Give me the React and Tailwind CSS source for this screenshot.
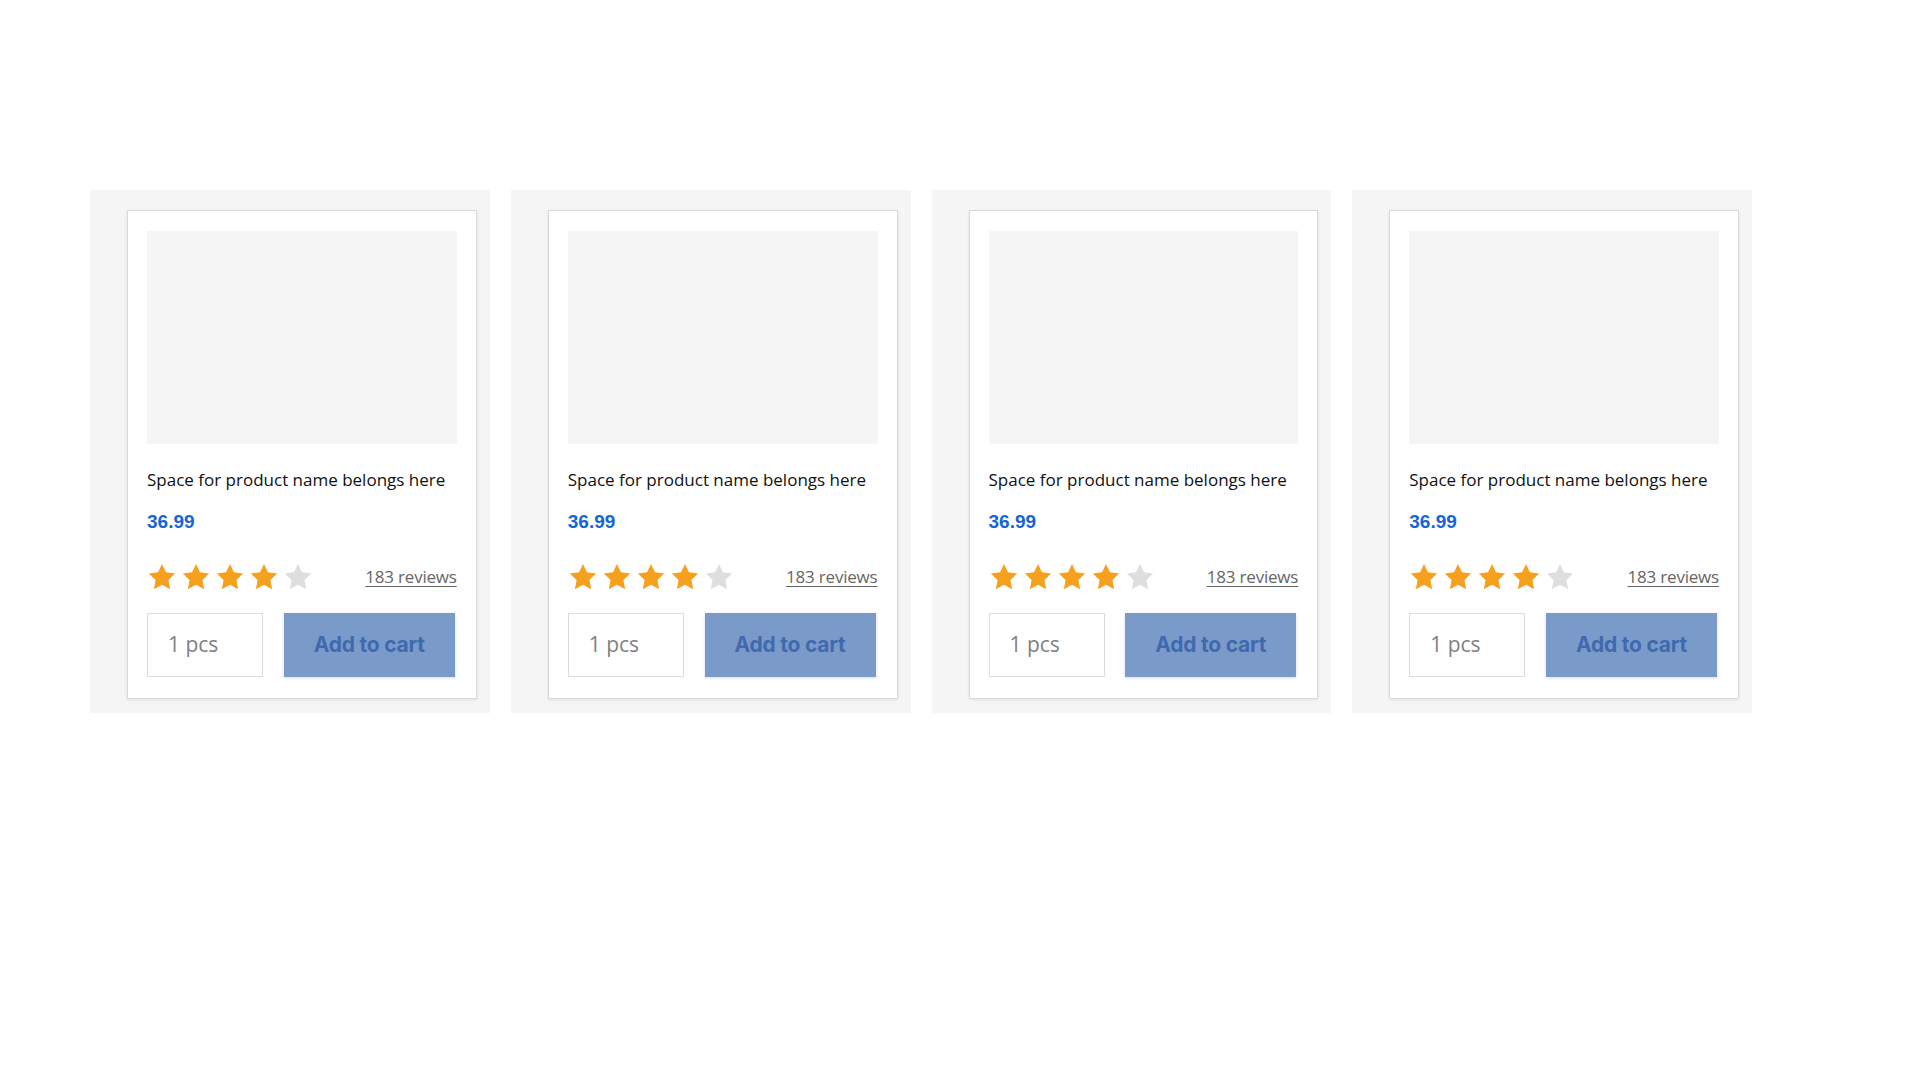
import React from 'react';

const Star = ({ filled }) => (
  <svg viewBox="0 0 24 24" className="w-[30px] h-[28px]" aria-hidden="true">
    <path
      d="M12 .8l3.4 7.2 7.9 1-5.8 5.5 1.5 7.9L12 18.6l-7 3.8 1.5-7.9L.7 9l7.9-1z"
      fill={filled ? '#f6a11d' : '#dedede'}
    />
  </svg>
);

const ProductCard = () => (
  <div className="bg-[#f5f5f5] pl-[37px] pr-[13px] pt-[20px] pb-[14px]">
    <div className="bg-white border border-[#d9d9d9] shadow-[0_1px_3px_rgba(0,0,0,0.08)] px-[19px] pt-[20px] pb-[21px]">
      <div className="h-[213px] bg-[#f5f5f5]" />
      <p className="mt-[25px] text-[17px] leading-[22px] text-[#111] font-['Open_Sans',sans-serif]">
        Space for product name belongs here
      </p>
      <p className="mt-[20px] text-[19px] leading-[22px] font-bold text-[#1565d8] font-['Liberation_Sans',Arial,sans-serif]">
        36.99
      </p>
      <div className="mt-[30px] flex items-center justify-between">
        <div className="flex items-center gap-[4px]">
          <Star filled />
          <Star filled />
          <Star filled />
          <Star filled />
          <Star />
        </div>
        <a href="#" className="text-[17px] leading-[22px] text-[#666] underline underline-offset-[3px] font-['Open_Sans',sans-serif] tracking-[-0.2px]">
          183 reviews
        </a>
      </div>
      <div className="mt-[22px] flex items-center justify-between">
        <div className="w-[116px] h-[64px] border border-[#dcdcdc] flex items-center pl-[20px] text-[21px] text-[#808080] font-['Open_Sans',sans-serif]">
          1 pcs
        </div>
        <button className="w-[171px] h-[64px] mr-[2px] bg-[#7a9bca] shadow-[0_1px_3px_rgba(0,0,0,0.15)] text-[21px] font-bold text-[#4169ad] font-['Inter',sans-serif] tracking-[-0.2px]">
          Add to cart
        </button>
      </div>
    </div>
  </div>
);

export default function App() {
  return (
    <div className="min-h-screen bg-white pt-[190px] pl-[90px]">
      <div className="w-[1662px] grid grid-cols-4 gap-[21px]">
        <ProductCard />
        <ProductCard />
        <ProductCard />
        <ProductCard />
      </div>
    </div>
  );
}
